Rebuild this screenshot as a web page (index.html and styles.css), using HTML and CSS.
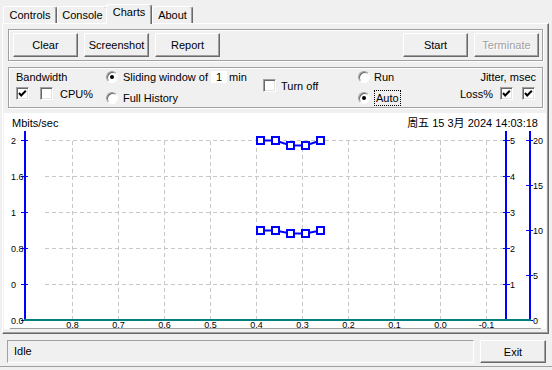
FILE: index.html
```html
<!DOCTYPE html>
<html lang="en">
<head>
    <meta charset="UTF-8">
    <title>Charts</title>
    <link rel="stylesheet" href="styles.css">
</head>
<body>
<div class="window">
    <!-- tab strip -->
    <div class="tabs">
        <div class="tab tab-controls">Controls</div>
        <div class="tab tab-console">Console</div>
        <div class="tab tab-charts active">Charts</div>
        <div class="tab tab-about">About</div>
    </div>

    <div class="panel">
        <div class="toolbar">
            <button class="btn">Clear</button>
            <button class="btn">Screenshot</button>
            <button class="btn">Report</button>
            <span class="spacer"></span>
            <button class="btn">Start</button>
            <button class="btn" disabled>Terminate</button>
        </div>

        <div class="options">
            <div class="col col-bw">
                <div class="row">Bandwidth</div>
                <div class="row">
                    <span class="check on"><svg viewBox="0 0 11 11"><polyline points="2,5 4.2,7.5 8.8,2.8"/></svg></span>
                    <span class="check check-cpu"></span>
                    <span class="label-cpu">CPU%</span>
                </div>
            </div>
            <div class="col col-window">
                <div class="row"><span class="radio on"></span><span>Sliding window of <span class="field">1</span> min</span></div>
                <div class="row row-low"><span class="radio"></span>Full History</div>
            </div>
            <div class="col col-turn">
                <div class="row"><span class="check"></span>Turn off</div>
            </div>
            <div class="col col-mode">
                <div class="row"><span class="radio"></span>Run</div>
                <div class="row row-low"><span class="radio on"></span><span class="focus">Auto</span></div>
            </div>
            <div class="col col-jitter">
                <div class="row">Jitter, msec</div>
                <div class="row">
                    <span class="label-loss">Loss%</span>
                    <span class="check on"><svg viewBox="0 0 11 11"><polyline points="2,5 4.2,7.5 8.8,2.8"/></svg></span>
                    <span class="check on check-jit"><svg viewBox="0 0 11 11"><polyline points="2,5 4.2,7.5 8.8,2.8"/></svg></span>
                </div>
            </div>
        </div>

        <div class="chart">
            <svg width="542" height="216" viewBox="4 113 542 216">
                <text class="title" x="12" y="126.5">Mbits/sec</text>
                <text class="title" x="538" y="126.5" text-anchor="end">周五 15 3月 2024 14:03:18</text>

                <!-- grid -->
                <g class="grid">
                    <line x1="45" y1="140.5" x2="505" y2="140.5"/>
                    <line x1="45" y1="176.5" x2="505" y2="176.5"/>
                    <line x1="45" y1="212.5" x2="505" y2="212.5"/>
                    <line x1="45" y1="248.5" x2="505" y2="248.5"/>
                    <line x1="45" y1="284.5" x2="505" y2="284.5"/>
                    <line x1="72.5" y1="141" x2="72.5" y2="319"/>
                    <line x1="118.5" y1="141" x2="118.5" y2="319"/>
                    <line x1="164.5" y1="141" x2="164.5" y2="319"/>
                    <line x1="210.5" y1="141" x2="210.5" y2="319"/>
                    <line x1="256.5" y1="141" x2="256.5" y2="319"/>
                    <line x1="302.5" y1="141" x2="302.5" y2="319"/>
                    <line x1="348.5" y1="141" x2="348.5" y2="319"/>
                    <line x1="394.5" y1="141" x2="394.5" y2="319"/>
                    <line x1="440.5" y1="141" x2="440.5" y2="319"/>
                    <line x1="486.5" y1="141" x2="486.5" y2="319"/>
                </g>

                <!-- axes -->
                <g class="axis">
                    <rect x="24" y="131" width="2" height="190"/>
                    <rect x="21" y="140" width="7" height="1"/>
                    <rect x="21" y="176" width="7" height="1"/>
                    <rect x="21" y="212" width="7" height="1"/>
                    <rect x="21" y="248" width="7" height="1"/>
                    <rect x="21" y="284" width="7" height="1"/>
                    <rect x="21" y="320" width="7" height="1"/>

                    <rect x="505" y="131" width="2" height="190"/>
                    <rect x="503" y="140" width="7" height="1"/>
                    <rect x="503" y="176" width="7" height="1"/>
                    <rect x="503" y="212" width="7" height="1"/>
                    <rect x="503" y="248" width="7" height="1"/>
                    <rect x="503" y="284" width="7" height="1"/>

                    <rect x="529" y="131" width="2" height="190"/>
                    <rect x="526" y="140" width="7" height="1"/>
                    <rect x="526" y="185" width="7" height="1"/>
                    <rect x="526" y="230" width="7" height="1"/>
                    <rect x="526" y="275" width="7" height="1"/>
                    <rect x="526" y="320" width="7" height="1"/>
                </g>
                <rect class="base" x="24" y="319" width="507" height="2"/>
                <rect class="frame" x="10" y="328" width="531" height="1"/>

                <g class="lbl">
                    <text x="11" y="144">2</text>
                    <text x="11" y="180">1.6</text>
                    <text x="11" y="216">1</text>
                    <text x="11" y="252">0.8</text>
                    <text x="11" y="288">0</text>
                    <text x="11" y="324">0.0</text>

                    <text x="510" y="144">5</text>
                    <text x="510" y="180">4</text>
                    <text x="510" y="216">3</text>
                    <text x="510" y="252">2</text>
                    <text x="510" y="288">1</text>

                    <text x="533" y="144">20</text>
                    <text x="533" y="189">15</text>
                    <text x="533" y="234">10</text>
                    <text x="533" y="279">5</text>
                    <text x="533" y="324">0</text>
                </g>
                <g class="lbl" text-anchor="middle">
                    <text x="72.5" y="328">0.8</text>
                    <text x="118.5" y="328">0.7</text>
                    <text x="164.5" y="328">0.6</text>
                    <text x="210.5" y="328">0.5</text>
                    <text x="256.5" y="328">0.4</text>
                    <text x="302.5" y="328">0.3</text>
                    <text x="348.5" y="328">0.2</text>
                    <text x="394.5" y="328">0.1</text>
                    <text x="440.5" y="328">0.0</text>
                    <text x="486.5" y="328">-0.1</text>
                </g>

                <!-- series -->
                <g class="series">
                    <polyline points="260.5,140.5 275.5,140.5 290.5,145.5 305.5,145.5 320.5,140.5"/>
                    <rect x="257" y="137" width="7" height="7"/>
                    <rect x="272" y="137" width="7" height="7"/>
                    <rect x="287" y="142" width="7" height="7"/>
                    <rect x="302" y="142" width="7" height="7"/>
                    <rect x="317" y="137" width="7" height="7"/>

                    <polyline points="260.5,230.5 275.5,230.5 290.5,233.5 305.5,233.5 320.5,230.5"/>
                    <rect x="257" y="227" width="7" height="7"/>
                    <rect x="272" y="227" width="7" height="7"/>
                    <rect x="287" y="230" width="7" height="7"/>
                    <rect x="302" y="230" width="7" height="7"/>
                    <rect x="317" y="227" width="7" height="7"/>
                </g>
            </svg>
        </div>
    </div>

    <div class="status">
        <div class="status-text">Idle</div>
        <button class="btn btn-exit">Exit</button>
    </div>
</div>
</body>
</html>
```

FILE: styles.css
```css
body { margin: 0; background: #f0f0f0; font-family: "Liberation Sans", Arial, sans-serif; font-size: 11px; color: #000; }
.window { height: 366px; border-bottom: 1px solid #a0a0a0; }

/* tabs */
.tabs { display: flex; align-items: flex-end; height: 23px; padding-left: 3px; }
.tab { box-sizing: border-box; height: 17px; line-height: 16px; text-align: center; border-top: 1px solid #fff; border-left: 1px solid #fff; border-right: 1px solid #696969; box-shadow: inset -1px 0 #a0a0a0; border-radius: 3px 3px 0 0; }
.tab-controls { width: 54px; }
.tab-console { width: 51px; }
.tab-charts { width: 46px; margin-left: -2px; }
.tab-about { width: 41px; }
.tab.active { position: relative; z-index: 1; height: 20px; line-height: 15px; margin-bottom: -1px; background: #f0f0f0; }

.panel { margin: 0 3px 0 2px; padding: 5px 0 4px; border: 1px solid; border-color: #fff #696969 #696969 #fff; box-shadow: inset -1px -1px #a0a0a0; }

/* etched boxes */
.toolbar, .options { border: 1px solid #a0a0a0; box-shadow: inset 1px 1px #fff, 1px 1px #fff; margin: 0 5px; }
.toolbar { display: flex; gap: 6px; height: 32px; box-sizing: border-box; padding: 3px 3px 2px 4px; }
.spacer { flex: 1; }

.btn { box-sizing: border-box; width: 65px; height: 24px; padding: 0; font: inherit; color: #000; background: #f0f0f0; border: 1px solid; border-color: #fff #696969 #696969 #fff; box-shadow: inset -1px -1px #a0a0a0; }
.btn:disabled { color: #a0a0a0; text-shadow: 1px 1px #fff; }
.btn-exit { width: 66px; height: 23px; }

.options { margin-top: 6px; height: 41px; box-sizing: border-box; display: flex; padding: 0 6px 0 7px; }
.col { display: flex; flex-direction: column; }
.row { display: flex; align-items: center; height: 17px; white-space: nowrap; }
.row-low { margin-top: 4px; }
.col-bw { width: 90px; }
.col-window { width: 157px; }
.col-window .row { gap: 5px; }
.col-turn { width: 95px; padding-top: 9px; }
.col-turn .row { gap: 5px; }
.col-mode .row { gap: 4px; }
.col-jitter { margin-left: auto; align-items: flex-end; }
.col-jitter .row:last-child { padding-right: 1px; }

.check { box-sizing: border-box; width: 13px; height: 13px; background: #fff; border: 1px solid; border-color: #a0a0a0 #fff #fff #a0a0a0; box-shadow: inset 1px 1px #696969, inset -1px -1px #e3e3e3; display: inline-flex; }
.check svg { width: 11px; height: 11px; }
.check polyline { fill: none; stroke: #000; stroke-width: 2; }
.check-cpu { margin-left: 11px; }
.label-cpu { margin-left: 7px; }
.label-loss { margin-right: 7px; }
.check-jit { margin-left: 9px; }

.radio { box-sizing: border-box; width: 12px; height: 12px; border-radius: 50%; background: #fff; border: 1px solid; border-color: #a0a0a0 #fff #fff #a0a0a0; box-shadow: inset 1px 1px #696969; display: inline-flex; align-items: center; justify-content: center; }
.radio.on::after { content: ""; width: 4px; height: 4px; border-radius: 50%; background: #000; }

.field { display: inline-block; background: #fff; width: 16px; height: 12px; line-height: 12px; text-align: center; margin-right: -1px; }
.focus { border: 1px dotted #000; padding: 0 1px; line-height: 14px; }

/* chart */
.chart { margin: 5px 2px 0 1px; height: 216px; background: #fff; }
.chart svg { display: block; }
.chart .title { font-family: "Liberation Sans", "Noto Sans CJK SC", sans-serif; font-size: 11px; fill: #000; }
.chart .lbl { font-family: "Liberation Sans", sans-serif; font-size: 9px; fill: #000; }
.grid line { stroke: #c8c8c8; stroke-width: 1; stroke-dasharray: 4 3; }
.axis rect { fill: #0000ff; }
.base { fill: #008080; }
.frame { fill: #a0a0a0; }
.series polyline { fill: none; stroke: #0000ff; stroke-width: 2; }
.series rect { fill: #fff; stroke: #0000ff; stroke-width: 2; }

/* status */
.status { display: flex; gap: 6px; margin-top: 6px; padding: 0 6px 0 7px; }
.status-text { flex: 1; box-sizing: border-box; height: 23px; line-height: 21px; padding-left: 6px; border: 1px solid; border-color: #a0a0a0 #fff #fff #a0a0a0; }
```
